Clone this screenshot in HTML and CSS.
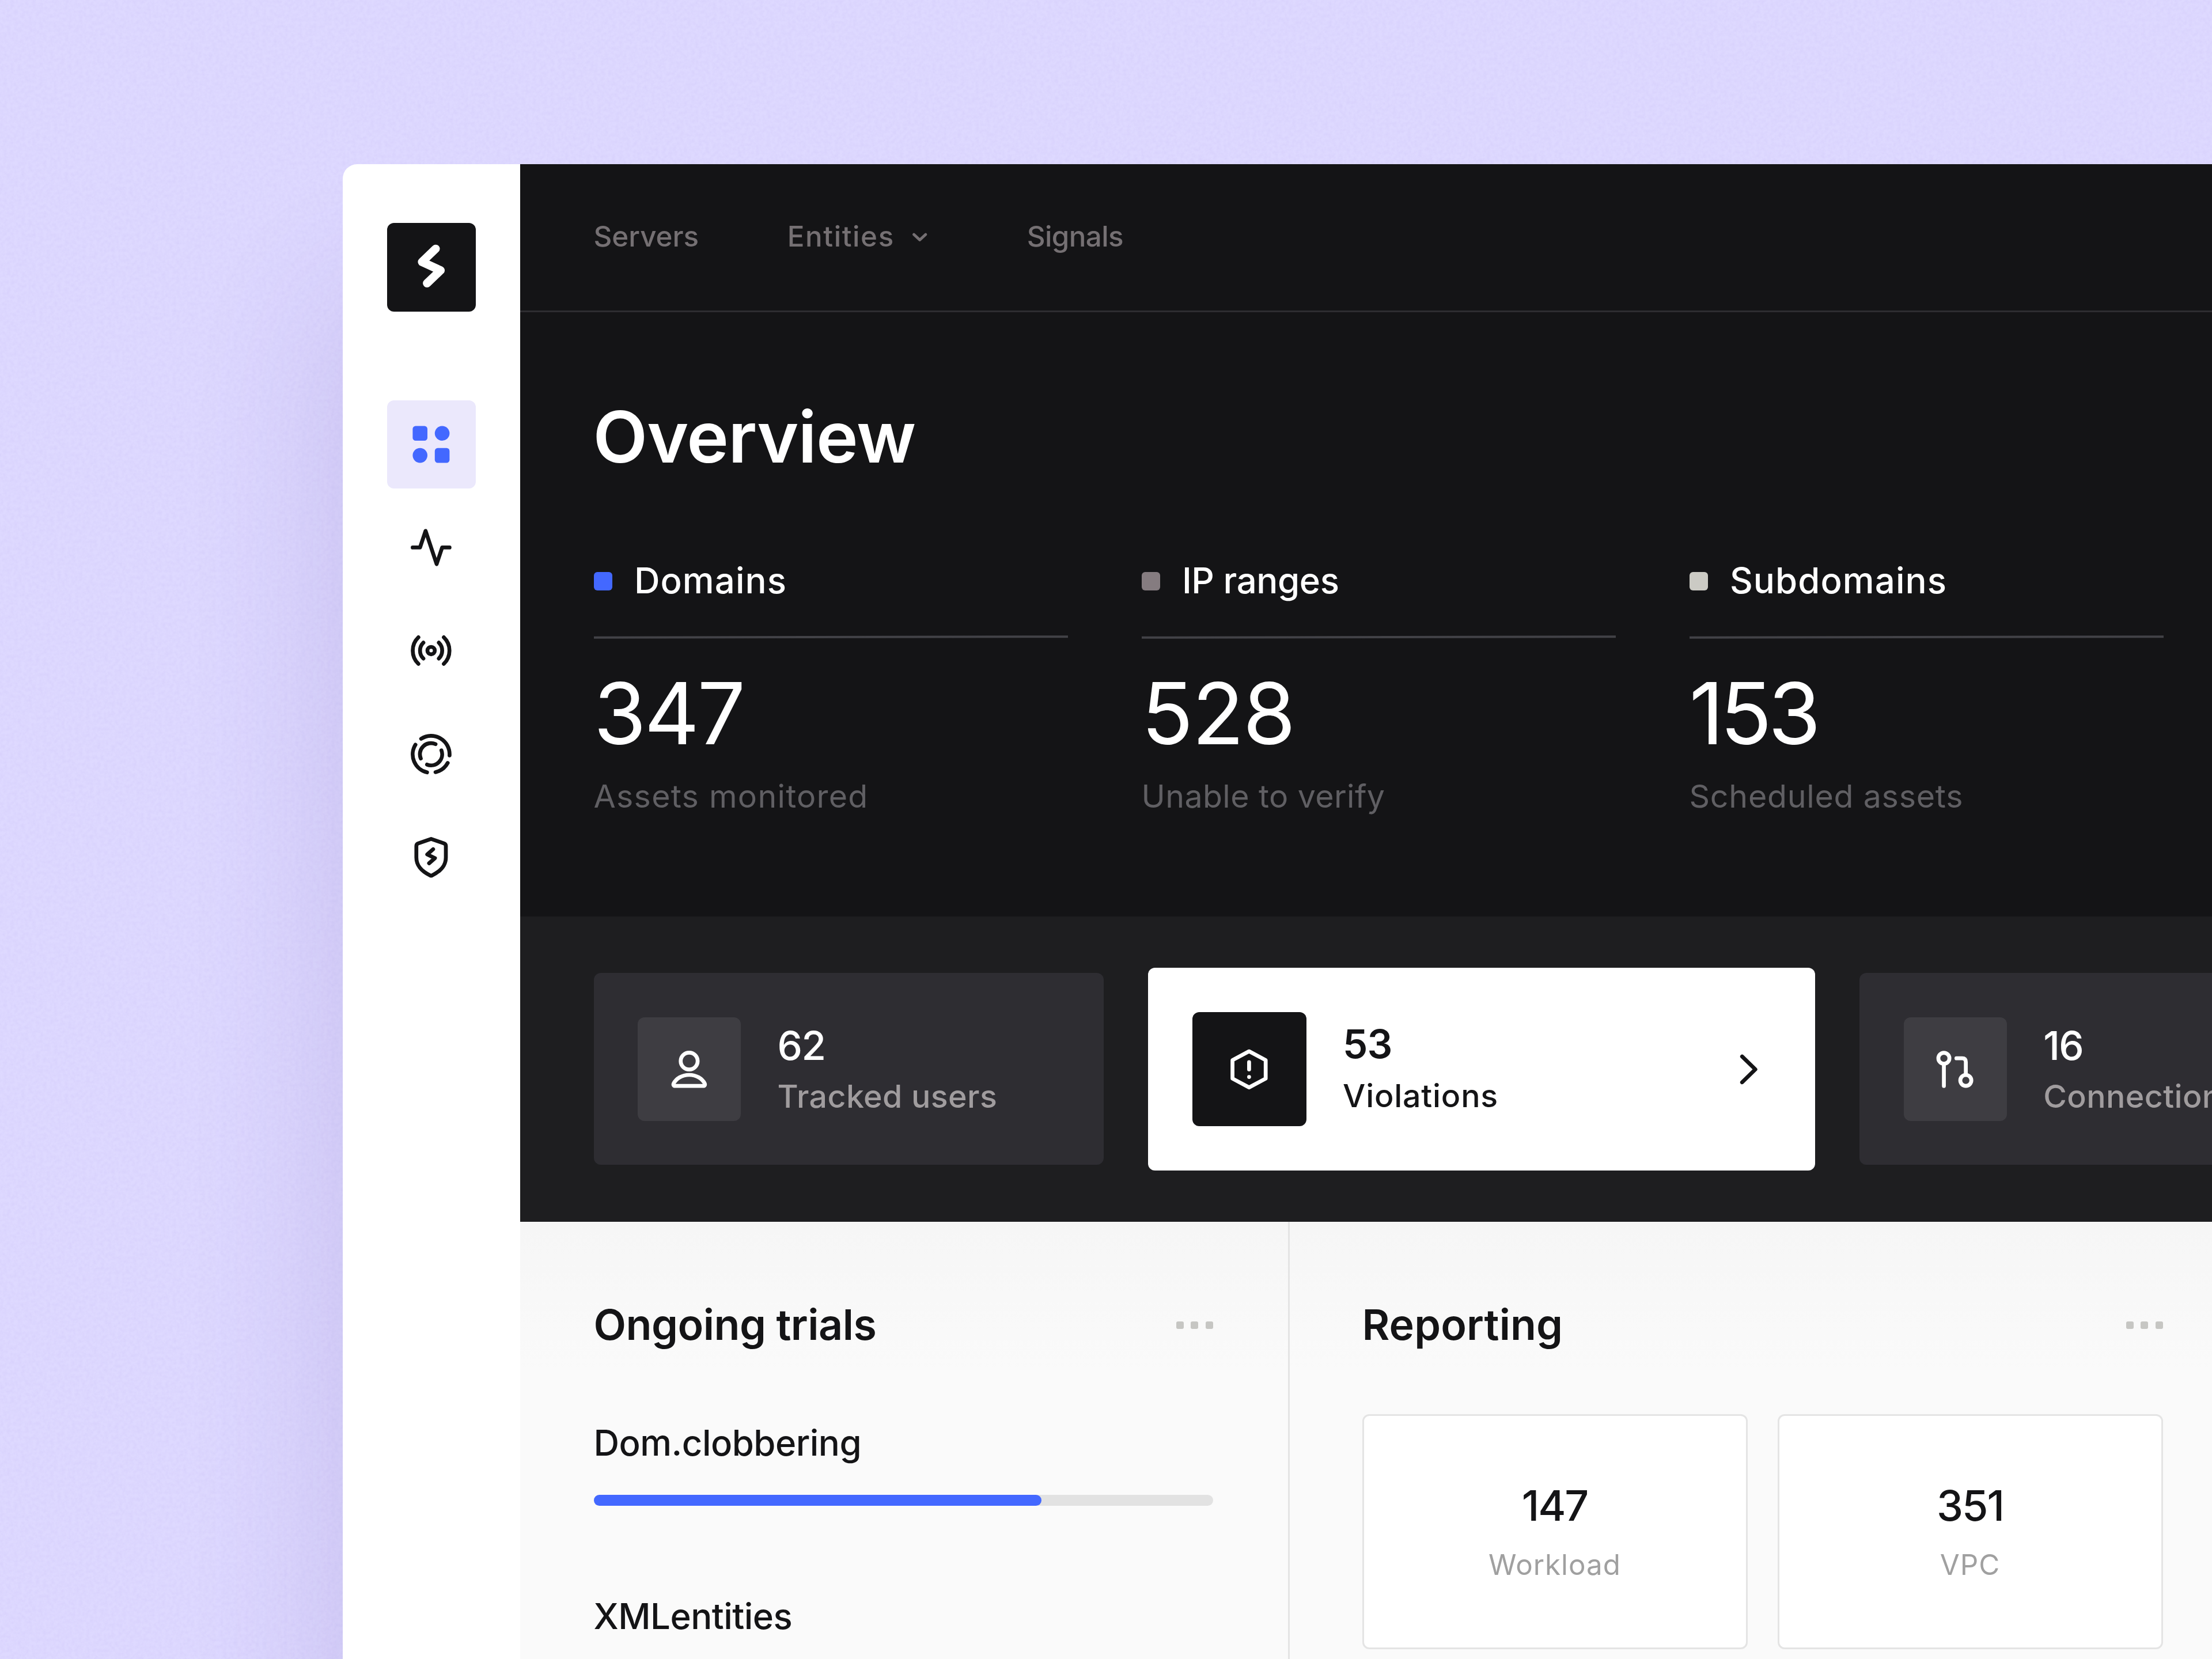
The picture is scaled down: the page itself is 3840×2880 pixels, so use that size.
FILE: index.html
```
<!DOCTYPE html>
<html lang="en">

<head>
    <meta charset="UTF-8">
    <title>Overview</title>
    <link rel="stylesheet" href="styles.css">
</head>

<body>
    <svg class="grain" width="3840" height="2880">
        <filter id="grain" x="0" y="0" width="100%" height="100%">
            <feTurbulence type="fractalNoise" baseFrequency="0.16" numOctaves="3" seed="4" />
            <feColorMatrix values="0 0 0 0 0.55  0 0 0 0 0.48  0 0 0 0 0.9  1.6 0 0 0 -0.5" />
        </filter>
        <rect width="3840" height="2880" filter="url(#grain)" />
    </svg>

    <div class="app">
        <aside class="sidebar">
            <div class="logo">
                <svg viewBox="0 0 154 154">
                    <path d="M84.5 45 60.8 67.8 93 82.6 69.5 105" />
                </svg>
            </div>
            <nav class="side-nav">
                <a class="side-link active">
                    <svg class="icon" viewBox="0 0 24 24">
                        <g fill="#4368ff" stroke="none">
                            <rect x="2" y="2" width="8" height="8" rx="1.6" />
                            <circle cx="18" cy="6" r="4" />
                            <circle cx="6" cy="18" r="4" />
                            <rect x="14" y="14" width="8" height="8" rx="1.6" />
                        </g>
                    </svg>
                </a>
                <a class="side-link">
                    <svg class="icon" viewBox="0 0 24 24">
                        <path d="M22 12h-4l-3 9L9 3l-3 9H2" />
                    </svg>
                </a>
                <a class="side-link">
                    <svg class="icon" viewBox="0 0 24 24">
                        <circle cx="12" cy="12" r="2" />
                        <path d="M7.8 7.7a6 6 0 0 0 0 8.6M16.2 7.7a6 6 0 0 1 0 8.6" />
                        <path d="M5.1 4.8a10 10 0 0 0 0 14.4M18.9 4.8a10 10 0 0 1 0 14.4" />
                    </svg>
                </a>
                <a class="side-link">
                    <svg class="icon" viewBox="0 0 24 24">
                        <path d="M6.6 3.6A10 10 0 0 1 22 12.6M21 16.7A10 10 0 0 1 14.4 21.7M9.8 21.8A10 10 0 0 1 3.5 6.8" />
                        <path d="M6.4 14.3A6 6 0 0 1 14.4 6.5M17.6 9.9A6 6 0 0 1 9.8 17.6" />
                    </svg>
                </a>
                <a class="side-link">
                    <svg class="icon" viewBox="0 0 24 24">
                        <path d="M12 2 19 4.4Q20 4.8 20 5.8V12C20 16.4 17.5 19.3 12.5 21.8Q12 22 11.5 21.8C6.5 19.3 4 16.4 4 12V5.8Q4 4.8 5 4.4Z" />
                        <path d="M13.1 7.6 9.9 10.4 14.1 12.4 10.9 15.2" />
                    </svg>
                </a>
            </nav>
        </aside>

        <main class="main">
            <nav class="top-nav">
                <a>Servers</a>
                <a class="entities">Entities
                    <svg viewBox="0 0 24 24">
                        <path d="M8 10.2l4 3.7 4-3.7" />
                    </svg>
                </a>
                <a class="signals">Signals</a>
            </nav>

            <section class="hero">
                <h1>Overview</h1>
                <div class="metrics">
                    <div class="metric">
                        <div class="metric-label"><span class="swatch blue"></span>Domains</div>
                        <div class="rule"></div>
                        <div class="metric-value">347</div>
                        <div class="metric-note wide">Assets monitored</div>
                    </div>
                    <div class="metric">
                        <div class="metric-label tight"><span class="swatch taupe"></span>IP ranges</div>
                        <div class="rule"></div>
                        <div class="metric-value loose">528</div>
                        <div class="metric-note">Unable to verify</div>
                    </div>
                    <div class="metric">
                        <div class="metric-label"><span class="swatch light"></span>Subdomains</div>
                        <div class="rule"></div>
                        <div class="metric-value narrow">153</div>
                        <div class="metric-note scheduled">Scheduled assets</div>
                    </div>
                </div>
            </section>

            <section class="strip">
                <div class="card">
                    <div class="card-icon">
                        <svg class="icon" viewBox="0 0 24 24">
                            <circle cx="12" cy="7.5" r="4.6" />
                            <path d="M12 15C8 15 5 17 3.6 19.6 3.2 20.4 3.6 21 4.4 21H19.6C20.4 21 20.8 20.4 20.4 19.6 19 17 16 15 12 15Z" />
                        </svg>
                    </div>
                    <div class="card-text">
                        <div class="card-value">62</div>
                        <div class="card-label">Tracked users</div>
                    </div>
                </div>
                <div class="card selected">
                    <div class="card-icon">
                        <svg class="icon" viewBox="0 0 24 24">
                            <path d="M12 2.2 21 7V17L12 21.8 3 17V7Z" />
                            <path d="M12 8.1V12M12 16.1h.01" />
                        </svg>
                    </div>
                    <div class="card-text">
                        <div class="card-value">53</div>
                        <div class="card-label">Violations</div>
                    </div>
                    <svg class="icon arrow" viewBox="0 0 24 24">
                        <path d="M8.2 5 15.4 12 8.2 19" />
                    </svg>
                </div>
                <div class="card">
                    <div class="card-icon">
                        <svg class="icon" viewBox="0 0 24 24">
                            <circle cx="5.8" cy="6" r="3" />
                            <circle cx="17.7" cy="18" r="3" />
                            <path d="M5.8 9V21M12.6 6H15.7Q17.7 6 17.7 8V15" />
                        </svg>
                    </div>
                    <div class="card-text">
                        <div class="card-value">16</div>
                        <div class="card-label">Connections</div>
                    </div>
                </div>
            </section>

            <section class="panels">
                <div class="panel trials">
                    <div class="panel-head">
                        <h2>Ongoing trials</h2>
                        <div class="dots"><i></i><i></i><i></i></div>
                    </div>
                    <div class="trial">
                        <div class="trial-name">Dom.clobbering</div>
                        <div class="bar">
                            <div class="bar-fill" style="width: 72.3%"></div>
                        </div>
                    </div>
                    <div class="trial">
                        <div class="trial-name">XMLentities</div>
                    </div>
                </div>
                <div class="panel reporting">
                    <div class="panel-head">
                        <h2>Reporting</h2>
                        <div class="dots"><i></i><i></i><i></i></div>
                    </div>
                    <div class="tiles">
                        <div class="tile">
                            <div class="tile-value">147</div>
                            <div class="tile-label">Workload</div>
                        </div>
                        <div class="tile">
                            <div class="tile-value">351</div>
                            <div class="tile-label">VPC</div>
                        </div>
                    </div>
                </div>
            </section>
        </main>
    </div>
</body>

</html>
```
FILE: styles.css
```
*,
*::after,
*::before {
    box-sizing: border-box;
}

body {
    margin: 0;
    width: 3840px;
    height: 2880px;
    overflow: hidden;
    background: #ded9ff;
    font-family: Inter, "Open Sans", sans-serif;
    color: #141416;
}

h1,
h2 {
    margin: 0;
}

/* soft paper texture behind the window */
.grain {
    position: absolute;
    top: 0;
    left: 0;
    opacity: 0.22;
}

.icon {
    display: block;
    width: 76.8px;
    height: 76.8px;
    fill: none;
    stroke: currentColor;
    stroke-width: 2.1;
    stroke-linecap: round;
    stroke-linejoin: round;
}

.app {
    position: relative;
    display: flex;
    width: 3373px;
    height: 2700px;
    margin: 285px 0 0 595px;
    border-radius: 25px 0 0 0;
    overflow: hidden;
    box-shadow: -10px 240px 260px rgba(80, 55, 150, 0.15);
}

/* sidebar */
.sidebar {
    width: 307.5px;
    flex: none;
    background: #fff;
    padding-top: 102.4px;
    display: flex;
    flex-direction: column;
    align-items: center;
}

.logo {
    width: 153.6px;
    height: 153.6px;
    border-radius: 12px;
    background: #141416;
}

.logo svg {
    display: block;
    fill: none;
    stroke: #fff;
    stroke-width: 14.5;
    stroke-linecap: round;
    stroke-linejoin: round;
}

.side-nav {
    margin-top: 153.6px;
    display: flex;
    flex-direction: column;
    gap: 25.6px;
}

.side-link {
    width: 153.6px;
    height: 153.6px;
    border-radius: 12px;
    display: flex;
    align-items: center;
    justify-content: center;
}

.side-link.active {
    background: #ebe8fc;
}

/* header */
.main {
    flex: 1;
    background: #141416;
}

.top-nav {
    display: flex;
    align-items: center;
    gap: 153.6px;
    height: 257.3px;
    padding: 0 0 4px 128px;
    border-bottom: 3px solid #2e2d31;
    font-size: 49.3px;
    font-weight: 500;
    color: #757073;
}

.top-nav a {
    display: flex;
    align-items: center;
}

.top-nav svg {
    width: 61.4px;
    height: 61.4px;
    margin: 4px 0 0 13px;
    fill: none;
    stroke: currentColor;
    stroke-width: 1.9;
    stroke-linecap: round;
    stroke-linejoin: round;
}

.entities {
    letter-spacing: 1.6px;
}

.signals {
    margin-left: 2px;
    letter-spacing: -0.6px;
}

.hero {
    height: 1048.3px;
    padding: 146.3px 128px 0;
    color: #fff;
}

h1 {
    font-size: 123px;
    font-weight: 600;
    line-height: 140px;
    letter-spacing: -0.8px;
    margin-left: -1px;
}

.metrics {
    display: flex;
    gap: 128px;
    margin-top: 139.4px;
}

.metric {
    width: 823px;
    flex: none;
}

.metric-label {
    display: flex;
    align-items: center;
    gap: 38.4px;
    font-size: 61.7px;
    font-weight: 500;
    line-height: 80px;
    letter-spacing: 1.1px;
}

.metric-label.tight {
    letter-spacing: -0.4px;
}

.swatch {
    width: 32px;
    height: 32px;
    margin-top: 3px;
    border-radius: 6px;
}

.blue {
    background: #4368ff;
}

.taupe {
    background: #857c80;
}

.light {
    background: #cbcac4;
}

.rule {
    height: 3.5px;
    margin-top: 56.5px;
    background: #424247;
    transform: rotate(-0.12deg);
}

.metric-value {
    margin-top: 51px;
    font-size: 148px;
    line-height: 160px;
    letter-spacing: -3.5px;
}

.metric-value.loose {
    letter-spacing: -2px;
}

.metric-value.narrow {
    letter-spacing: -6.6px;
}

.metric-note {
    margin-top: 27.9px;
    font-size: 55.5px;
    line-height: 70px;
    letter-spacing: 0.4px;
    color: #605f63;
}

.metric-note.wide {
    letter-spacing: 1.25px;
}

.metric-note.scheduled {
    letter-spacing: 0.75px;
}

/* card strip */
.strip {
    display: flex;
    align-items: center;
    gap: 76.8px;
    height: 530.8px;
    padding-left: 128px;
    background: #1e1e20;
}

.card {
    display: flex;
    align-items: center;
    width: 885.5px;
    height: 333px;
    flex: none;
    padding: 0 76.8px;
    border-radius: 12px;
    background: #2e2d32;
    color: #fff;
}

.card-icon {
    display: flex;
    align-items: center;
    justify-content: center;
    width: 179.2px;
    height: 179.2px;
    border-radius: 12px;
    background: #3e3d42;
}

.card-text {
    flex: 1;
    margin-left: 63px;
    padding-top: 6px;
}

.card-value {
    font-size: 69px;
    font-weight: 500;
    line-height: 88px;
    letter-spacing: -1.5px;
}

.card-label {
    font-size: 55.5px;
    font-weight: 500;
    line-height: 88px;
    letter-spacing: 0.4px;
    color: #a09c9e;
}

.card.selected {
    width: 1158.6px;
    height: 352px;
    background: #fff;
    color: #141416;
}

.selected .card-icon {
    width: 198.4px;
    height: 198.4px;
    background: #141416;
    color: #fff;
}

.selected .card-text {
    padding-top: 2px;
}

.selected .card-value {
    font-weight: 600;
    line-height: 90px;
    letter-spacing: -0.8px;
}

.selected .card-label {
    line-height: 90px;
    letter-spacing: 0.8px;
    color: #141416;
}

/* lower panels */
.panels {
    display: flex;
    height: 900px;
    background: linear-gradient(#f6f6f6, #fafafa 260px);
}

.panel {
    padding: 133.6px 128px 0;
}

.trials {
    width: 1336px;
    padding-right: 130px;
    border-right: 3px solid #e4e4e4;
}

.panel-head {
    display: flex;
    align-items: center;
    justify-content: space-between;
}

h2 {
    font-size: 73.5px;
    font-weight: 600;
    line-height: 90px;
    letter-spacing: -0.5px;
}

.reporting h2 {
    letter-spacing: 0.1px;
}

.dots {
    display: flex;
    gap: 12.5px;
}

.dots i {
    width: 13px;
    height: 13px;
    margin-top: 2px;
    border-radius: 3px;
    background: #c6c6c3;
}

.trial {
    margin-top: 120px;
}

.trial + .trial {
    margin-top: 151.4px;
}

.trial-name {
    font-size: 61.7px;
    font-weight: 500;
    line-height: 80px;
    letter-spacing: -0.5px;
}

.bar {
    height: 19.2px;
    margin-top: 50px;
    border-radius: 10px;
    background: #e2e2e2;
}

.bar-fill {
    height: 100%;
    border-radius: 10px;
    background: #4368ff;
}

.reporting {
    width: 1644px;
    padding-left: 126px;
}

.tiles {
    display: flex;
    gap: 52px;
    margin-top: 110px;
}

.tile {
    flex: 1;
    height: 408px;
    padding-top: 111px;
    border: 3px solid #e4e4e4;
    border-radius: 12px;
    background: #fff;
    text-align: center;
}

.tile-value {
    font-size: 73.5px;
    font-weight: 500;
    line-height: 90px;
    letter-spacing: -2px;
}

.tile-label {
    margin-top: 27px;
    font-size: 49.3px;
    line-height: 60px;
    letter-spacing: 1px;
    color: #a0a0a0;
}
```
